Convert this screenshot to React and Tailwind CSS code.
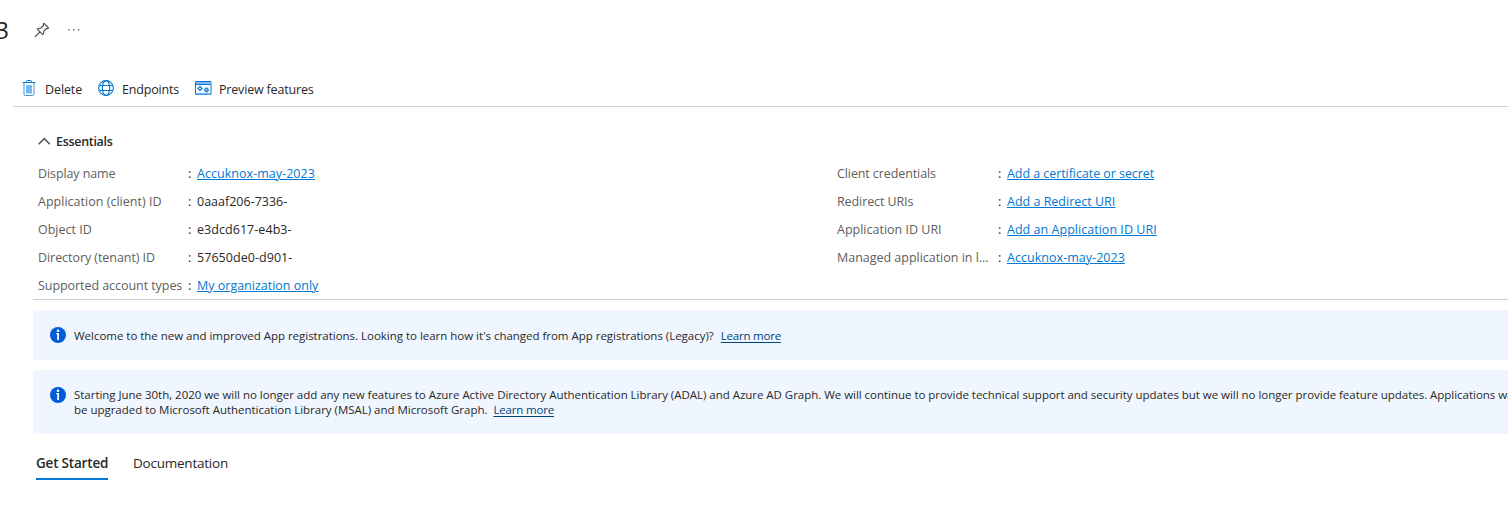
import React from "react";

function PinIcon() {
  return (
    <svg width="16" height="16" viewBox="0 0 16 16" fill="none" stroke="#484644" strokeWidth="1.1" strokeLinejoin="round" strokeLinecap="round">
      <path d="M9.8 1.2 14.6 6l-1.2.6-.9-.1-2.8 2.9c.3 1.3 0 2.400-.9 3.200L3.300 7.200c.9-.9 2-1.200 3.200-.9l2.900-2.800-.1-1.100z" />
      <path d="M5.900 10 1.200 14.700" />
    </svg>
  );
}

function TrashIcon() {
  return (
    <svg width="14" height="16" viewBox="0 0 14 16" fill="none">
      <path d="M4.500 2.500V1.300c0-.4.3-.8.8-.8h3.400c.5 0 .8.400.8.800v1.200" stroke="#0078d4" />
      <path d="M.5 2.500h13" stroke="#0078d4" />
      <path d="M2 3v11.300c0 .7.500 1.200 1.200 1.200h7.600c.7 0 1.200-.5 1.200-1.200V3" stroke="#3a94de" />
      <path d="M4 5h6v8.500H4z" fill="#76b7ec" />
    </svg>
  );
}

function GlobeIcon() {
  return (
    <svg width="16" height="16" viewBox="0 0 16 16" fill="none" stroke="#0078d4" strokeWidth="1.100">
      <circle cx="8" cy="8" r="7.400" />
      <ellipse cx="8" cy="8" rx="3.700" ry="7.400" />
      <path d="M1.400 5.500h13.200M1.400 10.500h13.200" />
    </svg>
  );
}

function PreviewIcon() {
  return (
    <svg width="17" height="14" viewBox="0 0 17 14" fill="none">
      <path d="M.5.500h15.500v12.800H.5z" stroke="#0078d4" />
      <path d="M1 1h14.500v2H1z" fill="#83b9f0" />
      <path d="M1 3.500h14.500" stroke="#0078d4" />
      <path d="M1 12.500h14.500" stroke="#83b9f0" strokeWidth="1.500" />
      <path d="m5 5.400 2 2-2 2-2-2zM11.500 7l1.900 1.900-1.900 1.900-1.900-1.900z" stroke="#0078d4" strokeWidth="1.300" />
    </svg>
  );
}

function InfoIcon() {
  return (
    <svg className="shrink-0" width="16" height="16" viewBox="0 0 16 16">
      <circle cx="8" cy="8" r="8" fill="#015cda" />
      <circle cx="8" cy="3.800" r="1.300" fill="#fff" />
      <path d="M6.200 6.100H9v7H7.200V7.200h-1z" fill="#fff" />
    </svg>
  );
}

function Row({ label, value, link, labelTrack, valueTrack, width }) {
  return (
    <div className="flex h-7 items-center whitespace-nowrap">
      <div className={width}>
        <span className={"text-[#605e5c] " + labelTrack}>{label}</span>
      </div>
      <span className="w-[9px]">:</span>
      {link ? (
        <a className={"text-[#0078d4] underline underline-offset-1 decoration-1 " + valueTrack}>{value}</a>
      ) : (
        <span className={valueTrack}>{value}</span>
      )}
    </div>
  );
}

export default function App() {
  return (
    <div className="flex h-[506px] w-full flex-col overflow-hidden bg-white font-['Open_Sans','Noto_Sans',sans-serif] text-[12.5px] text-[#292827]">
      <header className="flex h-[60px] shrink-0 items-center">
        <div className="flex w-[9px] justify-end text-[24px] font-medium">3</div>
        <div className="ml-[25px]"><PinIcon /></div>
        <svg className="ml-[18px]" width="12" height="2" viewBox="0 0 12 2" fill="#797775">
          <path d="M0 0h1.500v1.500H0zM5 0h1.500v1.500H5zM10 0h1.500v1.500H10z" />
        </svg>
      </header>

      <nav className="ml-[13px] mt-[11px] flex h-9 shrink-0 items-center whitespace-nowrap border-b border-[#d2d0ce] pb-[2px] pl-[9px]">
        <TrashIcon />
        <span className="ml-[9px] w-[53px] pt-[6px] tracking-[-0.1px]">Delete</span>
        <GlobeIcon />
        <span className="ml-2 w-[73px] pt-[6px] tracking-[-0.17px]">Endpoints</span>
        <PreviewIcon />
        <span className="ml-[7px] pt-[6px] tracking-[-0.18px]">Preview features</span>
      </nav>

      <section className="ml-[33px] flex h-[193px] shrink-0 flex-col border-b border-[#d2d0ce] pl-[5px] pt-6">
        <div className="flex h-[22px] shrink-0 items-center">
          <svg className="mb-[2px]" width="13" height="8" viewBox="0 0 13 8" fill="none" stroke="#484644" strokeWidth="1.400">
            <path d="m.7 7.200 5.600-5.700 5.600 5.700" />
          </svg>
          <span className="ml-[5px] font-semibold tracking-[-0.3px]">Essentials</span>
        </div>
        <div className="mt-[7px] flex shrink-0">
          <div className="w-[799px]">
            <Row width="w-[150px]" label="Display name" value="Accuknox-may-2023" link labelTrack="tracking-[-0.1px]" valueTrack="tracking-[0.04px]" />
            <Row width="w-[150px]" label="Application (client) ID" value="0aaaf206-7336-" labelTrack="tracking-[0.02px]" valueTrack="tracking-[0px]" />
            <Row width="w-[150px]" label="Object ID" value="e3dcd617-e4b3-" labelTrack="tracking-[0px]" valueTrack="tracking-[0.05px]" />
            <Row width="w-[150px]" label="Directory (tenant) ID" value="57650de0-d901-" labelTrack="tracking-[-0.06px]" valueTrack="tracking-[0.05px]" />
            <Row width="w-[150px]" label="Supported account types" value="My organization only" link labelTrack="tracking-[-0.06px]" valueTrack="tracking-[0px]" />
          </div>
          <div>
            <Row width="w-[161px]" label="Client credentials" value="Add a certificate or secret" link labelTrack="tracking-[-0.1px]" valueTrack="tracking-[-0.06px]" />
            <Row width="w-[161px]" label="Redirect URIs" value="Add a Redirect URI" link labelTrack="tracking-[-0.1px]" valueTrack="tracking-[0px]" />
            <Row width="w-[161px]" label="Application ID URI" value="Add an Application ID URI" link labelTrack="tracking-[0px]" valueTrack="tracking-[0.03px]" />
            <Row width="w-[161px]" label="Managed application in l..." value="Accuknox-may-2023" link labelTrack="tracking-[-0.02px]" valueTrack="tracking-[0.04px]" />
          </div>
        </div>
      </section>

      <div className="ml-[33px] mt-[10px] flex h-[50px] shrink-0 items-center whitespace-nowrap rounded-l-[2px] bg-[#eff6ff] pl-[17px] text-[11.5px]">
        <InfoIcon />
        <span className="ml-2 pt-[2px] tracking-[-0.022px]">Welcome to the new and improved App registrations. Looking to learn how it's changed from App registrations (Legacy)?</span>
        <a className="ml-[7px] pt-[2px] tracking-[-0.2px] text-[#004578] underline underline-offset-2">Learn more</a>
      </div>

      <div className="ml-[33px] mt-[10px] flex h-16 shrink-0 items-start overflow-hidden whitespace-nowrap rounded-l-[2px] bg-[#eff6ff] pl-[17px] pt-[17px] text-[11.5px] leading-[15px]">
        <InfoIcon />
        <div className="ml-2">
          <div className="tracking-[-0.03px]">Starting June 30th, 2020 we will no longer add any new features to Azure Active Directory Authentication Library (ADAL) and Azure AD Graph. We will continue to provide technical support and security updates but we will no longer provide feature updates. Applications will need to</div>
          <div className="flex">
            <span className="tracking-[-0.02px]">be upgraded to Microsoft Authentication Library (MSAL) and Microsoft Graph.</span>
            <a className="ml-[6px] tracking-[-0.18px] text-[#004578] underline underline-offset-2">Learn more</a>
          </div>
        </div>
      </div>

      <div className="ml-9 mt-[12px] flex whitespace-nowrap text-[13.5px]">
        <div className="flex h-[34px] w-[72px] items-center border-b-2 border-[#0078d4] pt-[2px] font-semibold tracking-[-0.2px]">Get Started</div>
        <div className="ml-[25px] flex h-[34px] items-center tracking-[-0.23px]">Documentation</div>
      </div>
    </div>
  );
}
